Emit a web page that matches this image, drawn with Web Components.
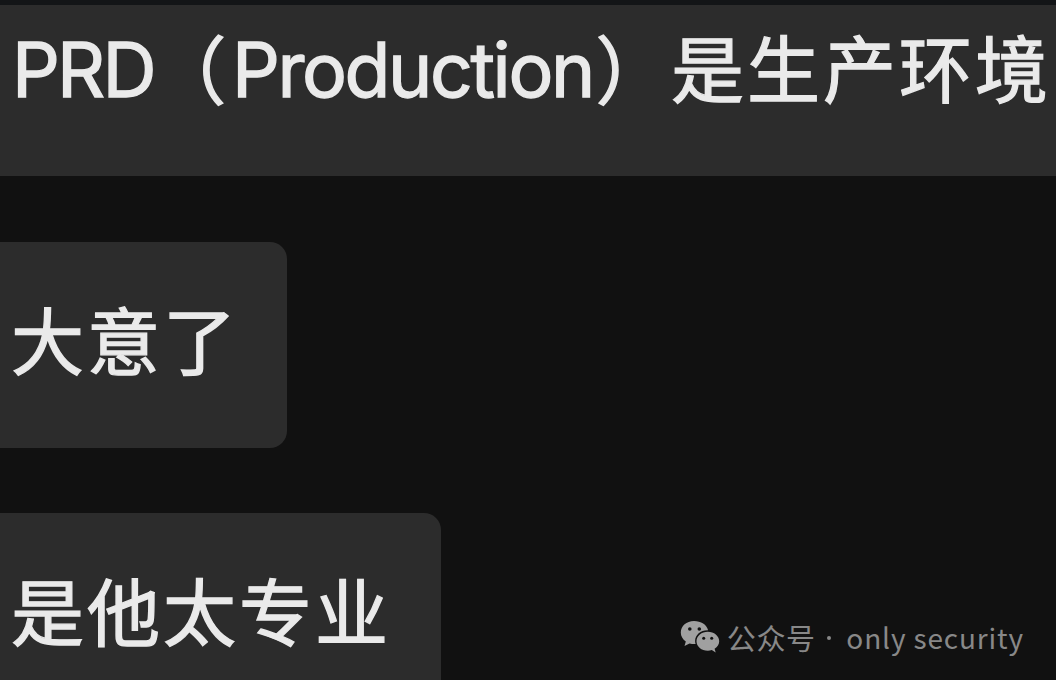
<!DOCTYPE html>
<html lang="zh-CN">
<head>
<meta charset="utf-8">
<title>Chat</title>
<style>
	html, body {
		margin: 0;
		height: 100%;
		overflow: hidden;
		background: #111;
	}
	.open {
		margin: 0 -14px 0 -20px;
	}
	.close {
		margin: 0 0.5px 0 -16px;
	}
	.open, .close {
		font-size: 74px;
		letter-spacing: 1px;
		line-height: 1;
		vertical-align: -1px;
	}
</style>
</head>
<body>
<chat-view>
	<chat-message style="--width: 1056px" cut><latin-run style="--tracking: -2.8px">PRD</latin-run><span class="open">（</span><latin-run>Production</latin-run><span class="close">）</span>是生产环境</chat-message>
	<chat-message style="--width: 287px">大意了</chat-message>
	<chat-message style="--width: 440.5px">是他太专业</chat-message>
	<account-mark slot="mark">
		<span slot="label">公众号</span>
		<span slot="name">only security</span>
	</account-mark>
</chat-view>

<script>
class ChatView extends HTMLElement {

	constructor() {
		super();

		const shadow = this.attachShadow({mode: 'open'});
		shadow.innerHTML = `
			<style>
			:host {
				display: block;
				position: relative;
				box-sizing: border-box;
				width: 1056px;
				height: 680px;
				overflow: hidden;
				border-top: 5px solid #131517;
				background: #111;
			}
			.list {
				display: flex;
				flex-direction: column;
				align-items: flex-start;
				gap: 65.5px;
			}
			/* Floats over the conversation. */
			.mark {
				position: absolute;
				right: 33px;
				bottom: 21px;
			}
			</style>
			<div class="list"><slot></slot></div>
			<div class="mark"><slot name="mark"></slot></div>
		`;
	}
}

class ChatMessage extends HTMLElement {

	constructor() {
		super();

		const shadow = this.attachShadow({mode: 'open'});
		shadow.innerHTML = `
			<style>
			:host {
				display: block;
				box-sizing: border-box;
				width: var(--width);
				height: 206px;
				padding: 49px 0 0 11px;
				border-radius: 0 17px 17px 0;
				background: #2c2c2c;
				color: #eaeaea;
				font: 400 73px/92px "Noto Sans CJK SC", sans-serif;
				letter-spacing: 3px;
				-webkit-text-stroke: 1.3px #eaeaea;
				white-space: nowrap;
			}
			/* Scrolled partly out at the top. */
			:host([cut]) {
				height: 171px;
				padding: 14px 0 0 12px;
				border-radius: 0;
			}
			</style>
			<slot></slot>
		`;
	}
}

class LatinRun extends HTMLElement {

	constructor() {
		super();

		const shadow = this.attachShadow({mode: 'open'});
		shadow.innerHTML = `
			<style>
			:host {
				display: inline;
				font-family: Inter, sans-serif;
				font-size: 75px;
				letter-spacing: var(--tracking, -2.4px);
			}
			</style>
			<slot></slot>
		`;
	}
}

class AccountMark extends HTMLElement {

	constructor() {
		super();

		const shadow = this.attachShadow({mode: 'open'});
		shadow.innerHTML = `
			<style>
			:host {
				display: flex;
				align-items: center;
				height: 44px;
				color: #888;
				font: 400 29px/44px "Noto Sans CJK SC", sans-serif;
				white-space: nowrap;
			}
			svg {
				width: 40px;
				height: 34px;
				margin-right: 7px;
			}
			.label {
				letter-spacing: 0.7px;
			}
			.dot {
				width: 4px;
				height: 4px;
				margin: 2px 15.5px 0 11px;
				border-radius: 50%;
				background: #888;
			}
			.name {
				font-size: 28px;
				letter-spacing: 0.85px;
				margin-right: -0.85px;
			}
			</style>
			<svg viewBox="0 0 40 34">
				<path fill="#a0a0a0" d="M14 1C6.500 1 .8 6 .8 12.500c0 3.600 1.900 6.900 5 9L4.500 26l5-2.600c1.700.5 3.200.7 4.900.7h1.200a11 11 0 0 1-.5-3.200c0-6.100 5.500-10.700 12.400-10.700h.6C26.800 4.700 21 1 14 1z"/>
				<path fill="#a0a0a0" d="M39.200 21.200c0-5.300-5.200-9.500-11.400-9.500s-11.300 4.200-11.300 9.500 5 9.500 11.300 9.500c1.400 0 2.800-.3 4-.6l3.900 2.300-1.100-3.700c2.800-1.800 4.600-4.400 4.600-7.500z"/>
				<g fill="#111">
					<circle cx="9.800" cy="9" r="1.800"/>
					<circle cx="19.300" cy="9" r="1.800"/>
					<circle cx="23.700" cy="18.300" r="1.500"/>
					<circle cx="31.700" cy="18.300" r="1.500"/>
				</g>
			</svg>
			<span class="label"><slot name="label"></slot></span>
			<span class="dot"></span>
			<span class="name"><slot name="name"></slot></span>
		`;
	}
}

customElements.define('chat-view', ChatView);
customElements.define('chat-message', ChatMessage);
customElements.define('latin-run', LatinRun);
customElements.define('account-mark', AccountMark);
</script>
</body>
</html>
